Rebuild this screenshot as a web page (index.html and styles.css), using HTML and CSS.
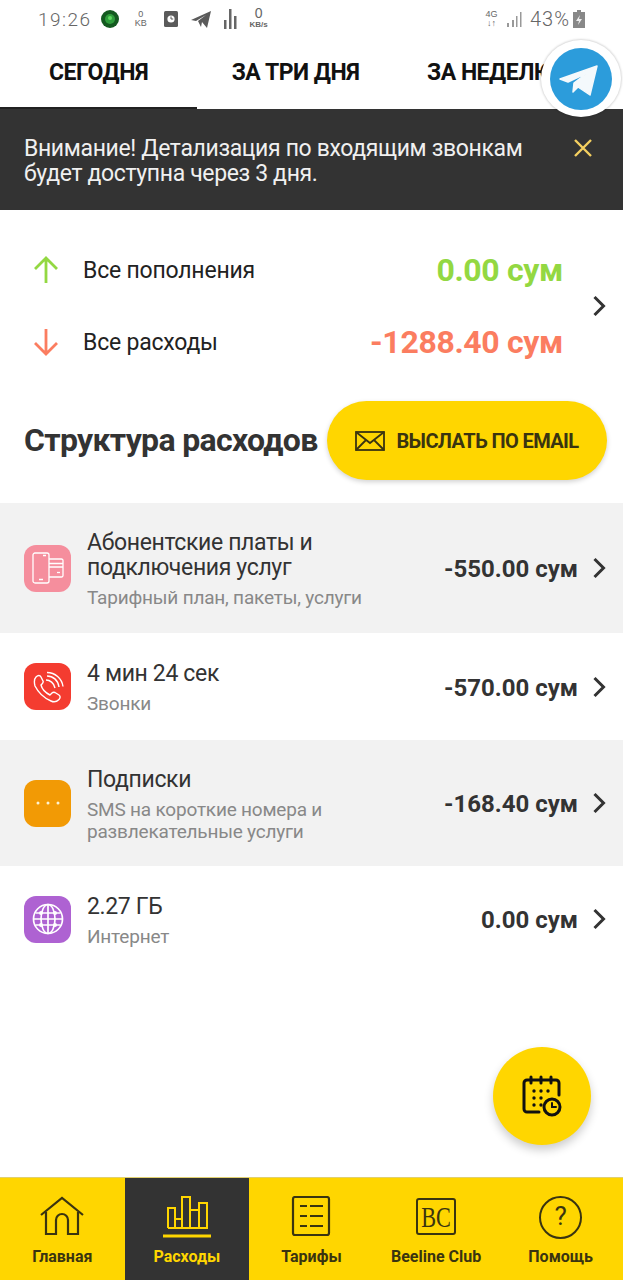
FILE: index.html
```html
<!DOCTYPE html>
<html lang="ru">
<head>
<meta charset="utf-8">
<title>Расходы</title>
<link rel="stylesheet" href="styles.css">
</head>
<body>
<div class="app">
  <div class="status">
    <div class="status-left">
      <span class="clock">19:26</span>
      <svg class="s-gem" viewBox="0 0 18 18"><circle cx="9" cy="9" r="9" fill="#145a20"/><circle cx="9" cy="9" r="5" fill="#2f9e3c"/><circle cx="9" cy="8" r="2" fill="#5fd860"/></svg>
      <span class="tiny tiny-kb">0<br>KB</span>
      <svg class="s-ic" viewBox="0 0 14 16"><rect width="14" height="16" rx="1.500" fill="#5a5a5a"/><circle cx="7" cy="8" r="3.600" fill="#fff"/><path d="M7 5.500V8h2.200" stroke="#5a5a5a" stroke-width="1" fill="none"/></svg>
      <svg class="s-tg" viewBox="0 0 20 17"><path d="M0 9 20 0 16 17 11 11 10 16 7 10 15 4 5 10Z" fill="#5a5a5a"/></svg>
      <svg class="s-bars" viewBox="0 0 14 20"><path d="M1 11h2.500v9H1zM6 0h2.500v20H6zM11 7h2.500v13H11z" fill="#666"/></svg>
      <span class="tiny tiny-kbs"><b>0</b><br>KB/s</span>
    </div>
    <div class="status-right">
      <span class="tiny tiny-4g">4G<br>↓↑</span>
      <svg class="s-sig" viewBox="0 0 16 15"><path d="M1 11h2v4H1zM6 8h2v7H6zM10 4h1.500v11H10zM14 0h1.500v15H14z" fill="#999"/></svg>
      <span class="pct">43%</span>
      <svg class="s-bat" viewBox="0 0 14 18"><path d="M5 0h4v2h4v16H1V2h4z" fill="#888"/><path d="M8 5 4 11h3l-1 4 4-6H7z" fill="#eee"/></svg>
    </div>
  </div>

  <nav class="tabs">
    <div class="tab tab-active">СЕГОДНЯ</div>
    <div class="tab tab-mid">ЗА ТРИ ДНЯ</div>
    <div class="tab tab-last">ЗА НЕДЕЛЮ</div>
  </nav>

  <div class="notice">
    <p class="notice-text"><span class="line">Внимание! Детализация по входящим звонкам</span><span class="line">будет доступна через 3 дня.</span></p>
    <svg class="notice-x" viewBox="0 0 20 20"><path d="M2 2 18 18M18 2 2 18" stroke="#f5d060" stroke-width="2.400" fill="none"/></svg>
  </div>

  <section class="summary">
    <div class="sum-rows">
      <div class="sum-row">
        <svg class="arrow" viewBox="0 0 26 28"><path d="M13 27V2M2 13 13 2 24 13" stroke="#93d842" stroke-width="2.800" fill="none"/></svg>
        <span class="sum-label">Все пополнения</span>
        <span class="sum-val val-up">0.00 сум</span>
      </div>
      <div class="sum-row">
        <svg class="arrow" viewBox="0 0 26 28"><path d="M13 1V26M2 15 13 26 24 15" stroke="#fb7d60" stroke-width="2.800" fill="none"/></svg>
        <span class="sum-label">Все расходы</span>
        <span class="sum-val val-down">-1288.40 сум</span>
      </div>
    </div>
    <svg class="chev" viewBox="0 0 14 22"><path d="M2.500 2 11.500 11 2.500 20" stroke="#333" stroke-width="3" fill="none"/></svg>
  </section>

  <div class="struct-head">
    <h2 class="struct-title">Структура расходов</h2>
    <div class="mail-btn">
      <svg class="mail-ic" viewBox="0 0 30 20"><g fill="none" stroke="#3a3410" stroke-width="1.800"><rect x="1" y="1" width="28" height="18"/><path d="M1 1 15 12 29 1M1 19 11 9M29 19 19 9"/></g></svg>
      <span>ВЫСЛАТЬ ПО EMAIL</span>
    </div>
  </div>

  <div class="list">
    <div class="row row-grey row-a">
      <div class="badge badge-pink">
        <svg viewBox="0 0 32 32" class="badge-ic"><g fill="none" stroke="#fff" stroke-width="1.300"><rect x="1" y="1" width="16" height="30" rx="2"/><path d="M7 27.500h4M11 3.500h3"/><path d="M17 7h12.500a1.500 1.500 0 0 1 1.500 1.500v15a1.500 1.500 0 0 1-1.500 1.500H17M17 11.500h14M17 15h14"/><path d="M25 20.500h3"/></g></svg>
      </div>
      <div class="row-text">
        <div class="row-title"><span class="line">Абонентские платы и</span><span class="line">подключения услуг</span></div>
        <div class="row-sub">Тарифный план, пакеты, услуги</div>
      </div>
      <div class="row-val">-550.00 сум</div>
      <svg class="chev" viewBox="0 0 14 22"><path d="M2.500 2 11.500 11 2.500 20" stroke="#333" stroke-width="3" fill="none"/></svg>
    </div>
    <div class="row row-b">
      <div class="badge badge-red">
        <svg viewBox="0 0 32 32" class="badge-ic"><g fill="none" stroke="#fff" stroke-width="1.400"><path d="M4 6c2-2 4-2 5 0l2 4c.5 1 0 2-1 3l-1 1c1 4 5 8 9 10l2-2c1-1 2-1 3-.5l4 2.500c1.500 1 1.500 3 0 4.500-2 2-5 3-8 1.500C12 27 6 21 3 15 2 11 2 8 4 6Z"/><path d="M14 9c4 0 8 3 9 8M15 5c6 0 11 4 12 11M15 1.500c8 0 15 6 16 14"/></g></svg>
      </div>
      <div class="row-text">
        <div class="row-title">4 мин 24 сек</div>
        <div class="row-sub">Звонки</div>
      </div>
      <div class="row-val">-570.00 сум</div>
      <svg class="chev" viewBox="0 0 14 22"><path d="M2.500 2 11.500 11 2.500 20" stroke="#333" stroke-width="3" fill="none"/></svg>
    </div>
    <div class="row row-grey row-c">
      <div class="badge badge-orange">
        <svg viewBox="0 0 32 32" class="badge-ic"><g fill="#fff3d0"><circle cx="6" cy="16" r="1.500"/><circle cx="16" cy="16" r="1.500"/><circle cx="26" cy="16" r="1.500"/></g></svg>
      </div>
      <div class="row-text">
        <div class="row-title">Подписки</div>
        <div class="row-sub"><span class="line">SMS на короткие номера и</span><span class="line">развлекательные услуги</span></div>
      </div>
      <div class="row-val">-168.40 сум</div>
      <svg class="chev" viewBox="0 0 14 22"><path d="M2.500 2 11.500 11 2.500 20" stroke="#333" stroke-width="3" fill="none"/></svg>
    </div>
    <div class="row row-d">
      <div class="badge badge-purple">
        <svg viewBox="0 0 32 32" class="badge-ic"><g fill="none" stroke="#fff" stroke-width="1.700"><circle cx="16" cy="16" r="14.500"/><ellipse cx="16" cy="16" rx="7" ry="14.500"/><path d="M16 2v28M3.500 10h25M3.500 22h25M2 16h28"/></g><g fill="#fff"><circle cx="9" cy="10" r="2"/><circle cx="23" cy="10" r="2"/><circle cx="9" cy="22" r="2"/><circle cx="23" cy="22" r="2"/></g></svg>
      </div>
      <div class="row-text">
        <div class="row-title">2.27 ГБ</div>
        <div class="row-sub">Интернет</div>
      </div>
      <div class="row-val">0.00 сум</div>
      <svg class="chev" viewBox="0 0 14 22"><path d="M2.500 2 11.500 11 2.500 20" stroke="#333" stroke-width="3" fill="none"/></svg>
    </div>
  </div>

  <div class="spacer"></div>

  <footer class="bottom">
    <div class="nav-item">
      <svg class="nav-ic" viewBox="0 0 44 44"><g fill="none" stroke="#3a3410" stroke-width="2.200"><path d="M1 19 22 2 43 19"/><path d="M6 16V38H16V24a6 6 0 0 1 12 0V38H38V16"/></g></svg>
      <span>Главная</span>
    </div>
    <div class="nav-item nav-active">
      <svg class="nav-ic nav-ic-chart" viewBox="0 0 44 44"><g fill="none" stroke="#ffd600" stroke-width="2"><path d="M3 32V12H10V32M10 23H17M17 32V1H25V32M25 14H34M34 32V7H42V32H3"/></g><path d="M-2 40H46" stroke="#ffd600" stroke-width="3"/></svg>
      <span>Расходы</span>
    </div>
    <div class="nav-item">
      <svg class="nav-ic" viewBox="0 0 44 44"><g fill="none" stroke="#3a3410" stroke-width="2.200"><rect x="4" y="1" width="36" height="38" rx="2"/><path d="M11 10h7M21 10h13M11 20h7M21 20h13M11 30h7M21 30h13"/></g></svg>
      <span>Тарифы</span>
    </div>
    <div class="nav-item">
      <div class="bc-box"><span class="bc-text">BC</span></div>
      <span>Beeline Club</span>
    </div>
    <div class="nav-item">
      <div class="help-ring">?</div>
      <span>Помощь</span>
    </div>
  </footer>

  <div class="tg-bubble">
    <svg viewBox="0 0 80 77" class="tg-ic"><path d="M19 39 56 26 49 55 37 47 32 52 33 43 46 33 27 42Z" fill="#f4f9fc" stroke="#f4f9fc" stroke-width="1.500" stroke-linejoin="round"/></svg>
  </div>
  <div class="fab">
    <svg viewBox="0 0 42 42" class="fab-ic"><g fill="none" stroke="#111" stroke-width="3" stroke-linecap="round"><path d="M18 37H6a3 3 0 0 1-3-3V8a3 3 0 0 1 3-3H35a3 3 0 0 1 3 3V20M10 2v6M20 2v6M30 2v6"/><circle cx="31" cy="32" r="8"/><path d="M31 28v4h4" stroke-width="2"/></g><g fill="#111"><circle cx="13" cy="16" r="1.700"/><circle cx="20" cy="16" r="1.700"/><circle cx="27" cy="16" r="1.700"/><circle cx="13" cy="23" r="1.700"/><circle cx="20" cy="23" r="1.700"/><circle cx="13" cy="30" r="1.700"/><circle cx="20" cy="30" r="1.700"/></g></svg>
  </div>
</div>
</body>
</html>
```
FILE: styles.css
```css
* { box-sizing: border-box; }
html, body { margin: 0; padding: 0; background: #fff; }
body { font-family: "Roboto", "Noto Sans", sans-serif; color: #333; }
svg { display: block; flex: none; }
.line { display: block; white-space: nowrap; height: 25px; }
.app { position: relative; width: 623px; height: 1280px; overflow: hidden; display: flex; flex-direction: column; }

.status { height: 38px; flex: none; display: flex; justify-content: space-between; align-items: center; padding: 0 37px 0 38px; color: #666; }
.status-left, .status-right { display: flex; align-items: center; }
.clock { font-size: 19px; letter-spacing: 1.500px; margin-right: 9px; font-weight: 300; }
.s-gem { width: 18px; height: 18px; margin-right: 16px; }
.tiny { font-family: "Liberation Sans", sans-serif; font-size: 9px; line-height: 9px; text-align: center; display: block; }
.tiny-kb { width: 12px; margin-right: 17px; }
.s-ic { width: 14px; height: 16px; margin-right: 13px; }
.s-tg { width: 20px; height: 17px; margin-right: 12px; }
.s-bars { width: 14px; height: 20px; margin-right: 11px; }
.tiny-kbs { font-weight: 700; font-size: 8px; width: 22px; }
.tiny-kbs b { font-size: 14px; line-height: 9px; font-weight: 400; }
.tiny-4g { margin-right: 8px; width: 13px; }
.s-sig { width: 16px; height: 15px; margin-right: 8px; }
.pct { font-size: 20px; margin-right: 2px; font-weight: 300; letter-spacing: 1px; }
.s-bat { width: 14px; height: 18px; }

.tabs { height: 71px; flex: none; display: flex; overflow: hidden; }
.tab { font-size: 23px; font-weight: 700; color: #111; line-height: 70px; text-align: center; white-space: nowrap; letter-spacing: -0.5px; }
.tab-active { width: 197px; border-bottom: 2px solid #222; }
.tab-mid { width: 197px; }
.tab-last { width: 229px; padding-left: 33px; text-align: left; }

.notice { height: 101px; flex: none; background: #333; display: flex; align-items: flex-start; padding: 27px 30px 0 24px; justify-content: space-between; }
.notice-text { margin: 0; font-size: 23px; line-height: 25px; color: #f0f0f0; letter-spacing: -0.36px; }
.notice-x { width: 20px; height: 20px; margin-top: 2px; }

.summary { flex: none; height: 191px; display: flex; align-items: flex-start; padding: 38px 17px 0 33px; }
.sum-rows { flex: 1; display: flex; flex-direction: column; gap: 28px; padding: 0 29px 0 0; }
.sum-row { display: flex; align-items: center; height: 44px; }
.arrow { width: 26px; height: 28px; margin-right: 24px; }
.sum-label { flex: 1; font-size: 23px; color: #222; letter-spacing: -0.2px; }
.sum-val { font-size: 32px; font-weight: 700; letter-spacing: -0.35px; }
.val-up { color: #93d842; }
.val-down { color: #fb7d60; }
.chev { width: 14px; height: 22px; }
.summary .chev { margin-top: 47px; }

.struct-head { flex: none; height: 102px; display: flex; align-items: flex-start; justify-content: space-between; padding: 0 16px 0 24px; }
.struct-title { margin: 0; font-size: 32px; font-weight: 700; color: #333; line-height: 79px; white-space: nowrap; letter-spacing: -0.67px; }
.mail-btn { width: 280px; height: 79px; border-radius: 40px; background: #ffd600; box-shadow: 0 2px 5px rgba(0,0,0,.18); display: flex; align-items: center; justify-content: center; gap: 11px; font-size: 20px; font-weight: 700; color: #3a3410; white-space: nowrap; letter-spacing: -0.6px; }
.mail-ic { width: 30px; height: 20px; }

.list { flex: none; }
.row { display: flex; align-items: center; padding: 0 17px 0 24px; }
.row-grey { background: #f2f2f2; }
.row-a { height: 130px; }
.row-b { height: 107px; }
.row-c { height: 126px; }
.row-d { height: 106px; }
.badge { width: 47px; height: 47px; border-radius: 12px; display: flex; align-items: center; justify-content: center; flex: none; margin-right: 16px; }
.badge-ic { width: 32px; height: 32px; }
.badge-pink { background: #f58e9d; }
.badge-red { background: #f43c30; }
.badge-orange { background: #f29a05; }
.badge-purple { background: #ae62d2; }
.row-text { flex: 1; min-width: 0; padding-top: 3px; }
.row-title { font-size: 23px; line-height: 25px; color: #333; letter-spacing: -0.35px; }
.row-sub { font-size: 19px; line-height: 22px; color: #888; margin-top: 7px; letter-spacing: -0.2px; }
.row-sub .line { height: 22px; }
.row-val { font-size: 24px; font-weight: 700; color: #333; margin-right: 14px; white-space: nowrap; padding-top: 2px; }

.spacer { flex: 1; }
.bottom { height: 103px; flex: none; background: #ffd600; display: flex; border-top: 1px solid #e0d070; }
.nav-item { width: 124.6px; display: flex; flex-direction: column; align-items: center; padding-top: 18px; font-size: 16px; font-weight: 700; color: #3a3410; white-space: nowrap; }
.nav-item > span { margin-top: 6px; line-height: 22px; }
.nav-ic { width: 44px; height: 44px; }
.nav-ic-chart { overflow: visible; }
.nav-active { background: #333; color: #ffd600; }
.bc-box { width: 40px; height: 37px; margin: 2px 0 5px; border: 2.200px solid #3a3410; border-radius: 3px; display: flex; align-items: center; justify-content: center; font-family: "Liberation Serif", serif; font-size: 30px; font-weight: 400; line-height: 30px; color: #3a3410; }
.bc-text { display: block; transform: scaleX(0.74); }
.help-ring { width: 43px; height: 43px; border: 2.200px solid #3a3410; border-radius: 50%; font-size: 26px; font-weight: 400; line-height: 37px; text-align: center; margin-bottom: 1px; }

.tg-bubble { position: absolute; left: 541px; top: 40px; width: 80px; height: 77px; border-radius: 50%; background: #fff; box-shadow: 0 0 2px 1px rgba(0,0,0,.15); }
.tg-bubble::before { content: ""; position: absolute; left: 9px; top: 8px; width: 62px; height: 62px; border-radius: 50%; background: #2c9cdb; }
.tg-ic { position: absolute; left: 0; top: 0; width: 80px; height: 77px; }
.fab { position: absolute; left: 493px; top: 1047px; width: 98px; height: 98px; border-radius: 50%; background: #ffd600; box-shadow: 0 5px 10px rgba(0,0,0,.2); display: flex; align-items: center; justify-content: center; }
.fab-ic { width: 42px; height: 42px; }
```
